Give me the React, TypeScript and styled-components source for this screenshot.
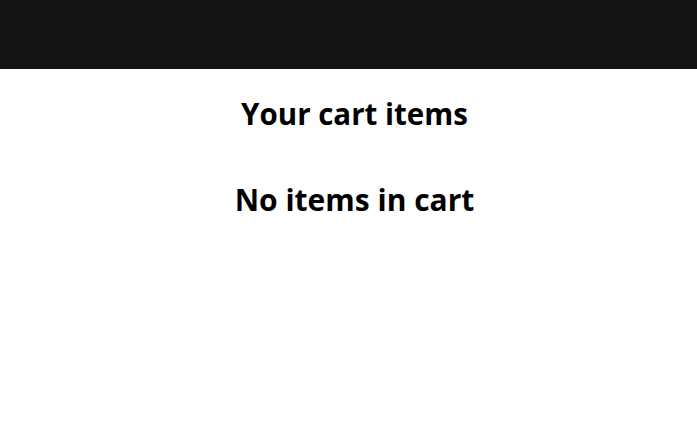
import React from 'react';
import styled, { createGlobalStyle } from 'styled-components';

const GlobalStyle = createGlobalStyle`
  body {
    margin: 0;
    background: #ffffff;
    font-family: "Open Sans", "Noto Sans", sans-serif;
    color: #000000;
  }
`;

const Navbar = styled.header`
  height: 69px;
  background: #141414;
`;

const Main = styled.main`
  display: flex;
  flex-direction: column;
  align-items: center;
  padding: 23px 0 0 12px;
`;

const Heading = styled.h2<{ $size: number; $gap?: number }>`
  margin: ${p => p.$gap ?? 0}px 0 0;
  font-size: ${p => p.$size}px;
  font-weight: 700;
  line-height: 44px;
`;

const App: React.FC = () => {
  return (
    <>
      <GlobalStyle />
      <Navbar />
      <Main>
        <Heading $size={29.5}>Your cart items</Heading>
        <Heading $size={30} $gap={42}>No items in cart</Heading>
      </Main>
    </>
  );
};

export default App;
